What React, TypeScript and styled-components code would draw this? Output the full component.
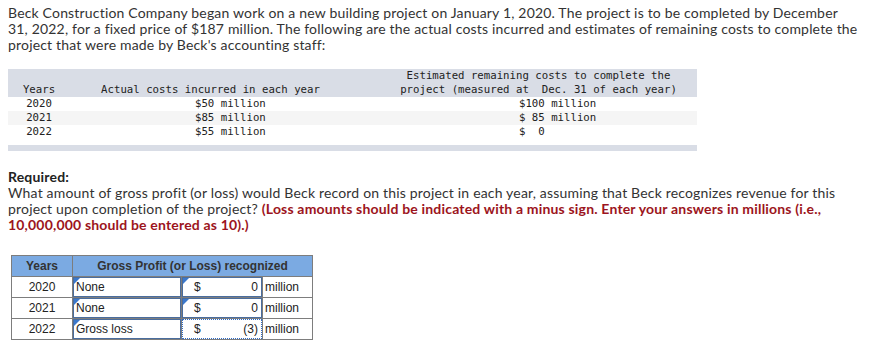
import styled, { createGlobalStyle } from 'styled-components';

const Global = createGlobalStyle`
    body {
        margin: 0;
        background: #fff;
    }
`;

const Page = styled.div`
    padding: 5px 0 0 8px;
    font-family: Lato, 'Noto Sans', sans-serif;
    font-size: 14px;
    line-height: 16px;
    letter-spacing: 0.18px;
    color: #333;
`;

const Para = styled.p`
    margin: 0;
    white-space: nowrap;
`;

const CostGrid = styled.div`
    display: grid;
    grid-template-columns: 62px 310px 317px;
    margin-top: 16px;
    font-family: 'DejaVu Sans Mono', 'Liberation Mono', monospace;
    font-size: 10.7px;
    line-height: 14px;
    letter-spacing: 0;
    color: #222;
`;

const HeadCell = styled.div<{ $shift?: number }>`
    display: flex;
    align-items: flex-end;
    justify-content: center;
    text-align: center;
    background: #d9dde6;
    white-space: pre;
    padding-left: ${p => (p.$shift && p.$shift > 0 ? p.$shift : 0)}px;
    padding-right: ${p => (p.$shift && p.$shift < 0 ? -p.$shift : 0)}px;
`;

const Cell = styled.div<{ $shade?: boolean; $indent?: number }>`
    background: ${p => (p.$shade ? '#f5f5f5' : '#fff')};
    white-space: pre;
    text-align: ${p => (p.$indent ? 'left' : 'center')};
    padding-left: ${p => p.$indent ?? 0}px;
`;

const FootBand = styled.div`
    grid-column: 1 / -1;
    height: 6px;
    margin-top: 6px;
    background: #d9dde6;
`;

const Required = styled.div`
    margin-top: 18px;
`;

const Title = styled.div`
    font-weight: 700;
    color: #222;
`;

const Red = styled.span`
    font-weight: 700;
    color: #9c1420;
`;

const AnswerTable = styled.table`
    margin: 22px 0 0 3px;
    border-collapse: collapse;
    font-family: 'Liberation Sans', Arial, sans-serif;
    font-size: 12px;
    line-height: 14px;
    letter-spacing: 0;
    color: #222;
    border: 1px solid #7d7d7d;
`;

const Th = styled.th`
    height: 20px;
    padding: 0;
    background: #7baae2;
    color: #333;
    font-weight: 700;
    text-align: center;
    border: 1px solid #7d7d7d;
`;

const Td = styled.td<{ $w: number }>`
    width: ${p => p.$w}px;
    height: 20px;
    padding: 0;
    border: 1px solid #7d7d7d;
    text-align: center;
`;

const UnitTd = styled(Td)`
    text-align: left;
    padding-left: 2px;
`;

const Box = styled.div<{ $dotted?: boolean }>`
    position: relative;
    box-sizing: border-box;
    height: 20px;
    display: flex;
    align-items: center;
    border: 1px ${p => (p.$dotted ? 'dotted #2f6cc6' : 'solid #4a6d9e')};
    text-align: left;
`;

const SelectBox = styled(Box)`
    padding-left: 2px;
`;

const AmountBox = styled(Box)`
    justify-content: space-between;
    padding: 0 3px 0 11px;
`;

const Flag = styled.span`
    position: absolute;
    top: 0;
    left: 0;
    width: 0;
    height: 0;
    border-top: 6px solid #3b78cc;
    border-right: 6px solid transparent;
`;

const rows = [
    { year: '2020', actual: '$50 million', remaining: '$100 million' },
    { year: '2021', actual: '$85 million', remaining: '$ 85 million' },
    { year: '2022', actual: '$55 million', remaining: '$  0' },
];

const answers = [
    { year: '2020', label: 'None', amount: '0', flagged: true },
    { year: '2021', label: 'None', amount: '0', flagged: true },
    { year: '2022', label: 'Gross loss', amount: '(3)', flagged: false },
];

export default function App() {
    return (
        <Page>
            <Global />
            <Para>
                Beck Construction Company began work on a new building project on January 1, 2020. The project is to be completed by December
                <br />
                31, 2022, for a fixed price of $187 million. The following are the actual costs incurred and estimates of remaining costs to complete the
                <br />
                project that were made by Beck's accounting staff:
            </Para>

            <CostGrid>
                <HeadCell>Years</HeadCell>
                <HeadCell $shift={-29}>Actual costs incurred in each year</HeadCell>
                <HeadCell>{'Estimated remaining costs to complete the\nproject (measured at  Dec. 31 of each year)'}</HeadCell>
                {rows.map((r, i) => [
                    <Cell key={r.year + 'y'} $shade={i === 1}>{r.year}</Cell>,
                    <Cell key={r.year + 'a'} $shade={i === 1} $indent={125}>{r.actual}</Cell>,
                    <Cell key={r.year + 'r'} $shade={i === 1} $indent={139}>{r.remaining}</Cell>,
                ])}
                <FootBand />
            </CostGrid>

            <Required>
                <Title>Required:</Title>
                <Para>
                    What amount of gross profit (or loss) would Beck record on this project in each year, assuming that Beck recognizes revenue for this
                    <br />
                    project upon completion of the project? <Red>(Loss amounts should be indicated with a minus sign. Enter your answers in millions (i.e.,</Red>
                    <br />
                    <Red>10,000,000 should be entered as 10).)</Red>
                </Para>
            </Required>

            <AnswerTable>
                <thead>
                    <tr>
                        <Th>Years</Th>
                        <Th colSpan={3}>Gross Profit (or Loss) recognized</Th>
                    </tr>
                </thead>
                <tbody>
                    {answers.map(a => (
                        <tr key={a.year}>
                            <Td $w={60}>{a.year}</Td>
                            <Td $w={108}>
                                <SelectBox>
                                    <Flag />
                                    {a.label}
                                </SelectBox>
                            </Td>
                            <Td $w={80}>
                                <AmountBox $dotted={!a.flagged}>
                                    {a.flagged && <Flag />}
                                    <span>$</span>
                                    <span>{a.amount}</span>
                                </AmountBox>
                            </Td>
                            <UnitTd $w={47}>million</UnitTd>
                        </tr>
                    ))}
                </tbody>
            </AnswerTable>
        </Page>
    );
}
